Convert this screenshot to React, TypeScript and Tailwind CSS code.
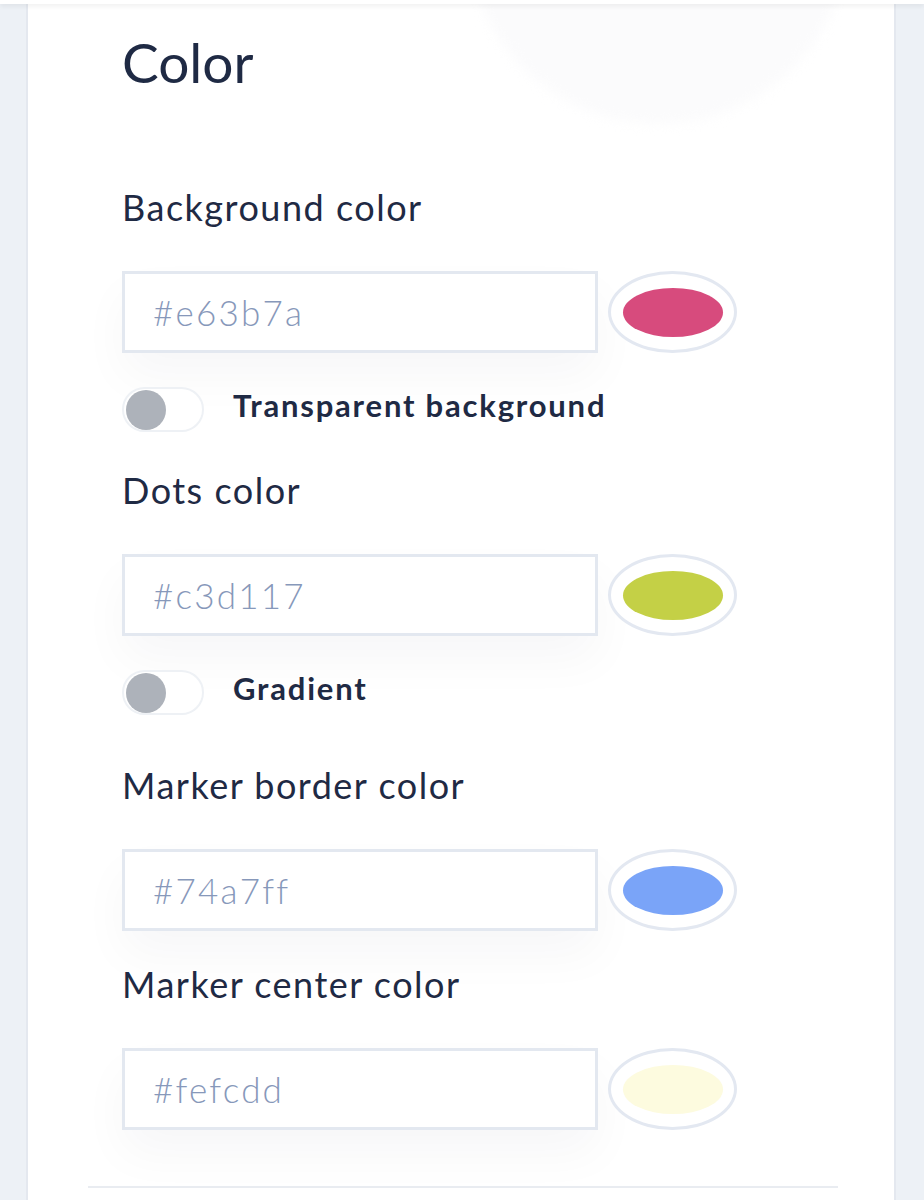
import React from 'react';

type Field = {
    label: string;
    value: string;
    swatch: string;
    toggle?: string;
};

const fields: Field[] = [
    { label: 'Background color', value: '#e63b7a', swatch: 'bg-[#d74b7d]', toggle: 'Transparent background' },
    { label: 'Dots color', value: '#c3d117', swatch: 'bg-[#c4d046]', toggle: 'Gradient' },
    { label: 'Marker border color', value: '#74a7ff', swatch: 'bg-[#7aa4f8]' },
    { label: 'Marker center color', value: '#fefcdd', swatch: 'bg-[#fdfbdf]' },
];

function Toggle({ label }: { label: string }) {
    return (
        <div className="flex items-center mt-[34px] h-[45px]">
            <div className="w-[82px] h-[45px] rounded-full bg-white border-2 border-[#eef1f5] flex items-center px-[2px]">
                <div className="w-[40px] h-[40px] rounded-full bg-[#adb2ba]"></div>
            </div>
            <span className="ml-[29px] pb-[8px] text-[31px] font-bold tracking-[1.8px] text-[#1f2a44]">{label}</span>
        </div>
    );
}

function ColorField({ field, first }: { field: Field; first: boolean }) {
    return (
        <div className={first ? '' : field.label === 'Dots color' ? 'mt-[34px]' : field.label === 'Marker border color' ? 'mt-[46px]' : 'mt-[29px]'}>
            {/* Label */}
            <div className="h-[48px] leading-[48px] text-[36px] tracking-[1.5px] text-[#1f2a44]">{field.label}</div>

            {/* Input + swatch */}
            <div className="flex items-center mt-[40px]">
                <div className="w-[476px] h-[82px] border-[3px] border-[#e3e8f0] bg-white flex items-center pl-[28px] shadow-[0_24px_48px_rgba(30,40,70,0.035)]">
                    <span className="text-[35px] font-light text-[#8798ba] tracking-[2.2px]">{field.value}</span>
                </div>
                <div className="ml-[10px] w-[129px] h-[82px] rounded-[50%] border-[3px] border-[#e3e8f1] bg-white flex items-center justify-center">
                    <div className={`w-[100px] h-[49px] rounded-[50%] ${field.swatch}`}></div>
                </div>
            </div>

            {field.toggle && <Toggle label={field.toggle} />}
        </div>
    );
}

export default function App() {
    return (
        <div className="w-[924px] h-[1200px] bg-[#edf1f6] overflow-hidden relative font-['Lato','Noto_Sans',sans-serif]">
            {/* Top header edge */}
            <div className="h-[4px] bg-white shadow-[0_2px_5px_rgba(0,0,0,0.08)] relative z-10"></div>

            {/* Card */}
            <div className="ml-[26px] w-[870px] h-[1196px] bg-white border-l-2 border-r-2 border-[#e4e8ef] relative overflow-hidden">
                {/* Faint decorative blob */}
                <div className="absolute left-[440px] top-[-260px] w-[380px] h-[380px] rounded-full bg-[#fbfbfc] blur-[6px]"></div>

                <div className="relative pl-[94px] pt-[23px]">
                    <h1 className="text-[55px] leading-[70px] text-[#1f2a44]">Color</h1>

                    <div className="mt-[86px]">
                        {fields.map((f, i) => (
                            <ColorField key={f.label} field={f} first={i === 0} />
                        ))}
                    </div>
                </div>

                {/* Divider */}
                <div className="relative ml-[60px] mt-[56px] w-[750px] h-[2px] bg-[#e9ecf1]"></div>
            </div>
        </div>
    );
}
